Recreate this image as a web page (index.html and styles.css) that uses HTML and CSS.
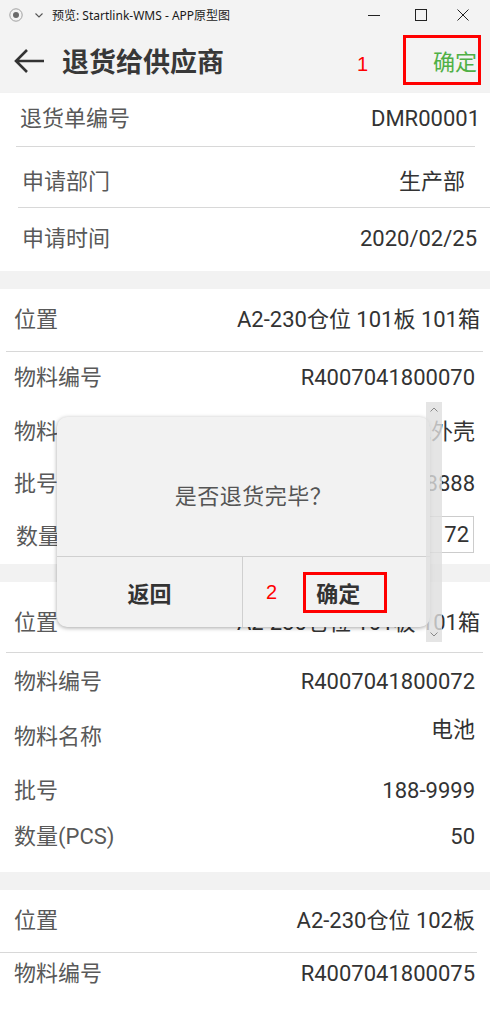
FILE: index.html
```html
<!DOCTYPE html>
<html lang="zh-CN">
<head>
    <meta charset="UTF-8">
    <meta name="viewport" content="width=device-width, initial-scale=1.0">
    <title>退货给供应商</title>
    <link rel="stylesheet" href="styles.css">
</head>
<body>

<div class="screen">
    <!-- Preview window title bar -->
    <div class="titlebar">
        <svg class="rec-icon" width="14" height="14" viewBox="0 0 14 14">
            <circle cx="7" cy="7" r="6.2" fill="none" stroke="#a0a0a0" stroke-width="1"/>
            <circle cx="7" cy="7" r="3" fill="#6a6a6a"/>
        </svg>
        <svg class="menu-chevron" width="8" height="5" viewBox="0 0 8 5">
            <path d="M0.5 0.5 L4 4 L7.5 0.5" fill="none" stroke="#555" stroke-width="1.1"/>
        </svg>
        <span class="window-title">预览: Startlink-WMS - APP原型图</span>
        <div class="win-controls">
            <svg class="win-min" width="12" height="12" viewBox="0 0 12 12">
                <path d="M0 6.5 H12" stroke="#222" stroke-width="1"/>
            </svg>
            <svg class="win-max" width="12" height="12" viewBox="0 0 12 12">
                <rect x="0.5" y="0.5" width="11" height="11" fill="none" stroke="#222" stroke-width="1"/>
            </svg>
            <svg class="win-close" width="12" height="12" viewBox="0 0 12 12">
                <path d="M0.5 0.5 L11.5 11.5 M11.5 0.5 L0.5 11.5" stroke="#222" stroke-width="1"/>
            </svg>
        </div>
    </div>

    <!-- App header -->
    <div class="header">
        <svg class="back" width="32" height="26" viewBox="0 0 32 26">
            <path d="M31 13 H3 M14 2 L3 13 L14 24" fill="none" stroke="#333" stroke-width="2.6"/>
        </svg>
        <h1 class="page-title">退货给供应商</h1>
        <span class="mark mark-1">1</span>
        <div class="confirm-box">确定</div>
    </div>

    <div class="content">
        <!-- Order info -->
        <div class="card head">
            <div class="row h53">
                <span class="label">退货单编号</span>
                <span class="value pr10">DMR00001</span>
            </div>
            <div class="line l1"></div>
            <div class="row h60 pt10 pl22">
                <span class="label">申请部门</span>
                <span class="value pr25">生产部</span>
            </div>
            <div class="line l2"></div>
            <div class="row h63 pl22">
                <span class="label">申请时间</span>
                <span class="value pr13">2020/02/25</span>
            </div>
        </div>

        <!-- Item 1 -->
        <div class="card">
            <div class="row h62">
                <span class="label">位置</span>
                <span class="value pr10">A2-230仓位 101板 101箱</span>
            </div>
            <div class="line l3"></div>
            <div class="row h53">
                <span class="label">物料编号</span>
                <span class="value">R4007041800070</span>
            </div>
            <div class="row h54">
                <span class="label">物料名称</span>
                <span class="value">电池外壳</span>
            </div>
            <div class="row h51">
                <span class="label">批号</span>
                <span class="value">188-8888</span>
            </div>
            <div class="row h54 pl16">
                <span class="label">数量(PCS)</span>
                <div class="qty-box">72</div>
            </div>
        </div>

        <!-- Item 2 -->
        <div class="card">
            <div class="row h70 pt12">
                <span class="label">位置</span>
                <span class="value pr10">A2-230仓位 101板 101箱</span>
            </div>
            <div class="line l3"></div>
            <div class="row h58">
                <span class="label">物料编号</span>
                <span class="value">R4007041800072</span>
            </div>
            <div class="row h53">
                <span class="label">物料名称</span>
                <span class="value top">电池</span>
            </div>
            <div class="row h51 pt4">
                <span class="label">批号</span>
                <span class="value">188-9999</span>
            </div>
            <div class="row h57 pb12">
                <span class="label">数量(PCS)</span>
                <span class="value">50</span>
            </div>
        </div>

        <!-- Item 3 -->
        <div class="card">
            <div class="row h62">
                <span class="label">位置</span>
                <span class="value">A2-230仓位 102板</span>
            </div>
            <div class="line l4"></div>
            <div class="row h42">
                <span class="label">物料编号</span>
                <span class="value">R4007041800075</span>
            </div>
            <div class="row h53"></div>
        </div>
    </div>

    <!-- Confirm dialog -->
    <div class="dialog">
        <div class="dialog-msg">是否退货完毕？</div>
        <div class="dialog-btns">
            <div class="dlg-btn">返回</div>
            <div class="dlg-btn ok">
                <span class="mark mark-2">2</span>
                <span class="ok-box">确定</span>
            </div>
        </div>
    </div>

    <!-- Scroll strip of the dialog -->
    <div class="scrollbar">
        <svg width="8" height="5" viewBox="0 0 8 5">
            <path d="M0.5 4.5 L4 1 L7.5 4.5" fill="none" stroke="#888" stroke-width="1"/>
        </svg>
        <svg width="8" height="5" viewBox="0 0 8 5">
            <path d="M0.5 0.5 L4 4 L7.5 0.5" fill="none" stroke="#888" stroke-width="1"/>
        </svg>
    </div>
</div>

</body>
</html>
```

FILE: styles.css
```css
body {
    margin: 0;
    font-family: Roboto, "Noto Sans CJK SC", sans-serif;
}

.screen {
    position: relative;
    width: 490px;
    height: 1012px;
    overflow: hidden;
    background-color: #f2f2f2;
}

/* Window title bar */
.titlebar {
    height: 30px;
    display: flex;
    align-items: center;
    padding-left: 9px;
    background-color: #f3f3f3;
    font-family: "Noto Sans", "Noto Sans CJK SC", sans-serif;
    font-size: 12px;
    color: #1a1a1a;
}

.menu-chevron {
    margin-left: 12px;
}

.window-title {
    margin-left: 9px;
}

.win-controls {
    margin-left: auto;
    display: flex;
    align-items: center;
    padding-right: 21px;
}

.win-max {
    margin-left: 35px;
}

.win-close {
    margin-left: 30px;
}

/* App header */
.header {
    height: 62px;
    display: flex;
    align-items: center;
    background-color: #f3f3f3;
}

.back {
    margin-left: 13px;
}

.page-title {
    margin: 0 0 2px 17px;
    font-size: 27px;
    font-weight: bold;
    color: #383838;
}

.mark {
    font-family: "Liberation Sans", sans-serif;
    font-size: 20px;
    color: #f00;
}

.mark-1 {
    margin-left: auto;
    padding-top: 6px;
}

.confirm-box {
    box-sizing: border-box;
    width: 78px;
    height: 50px;
    margin: 0 9px 2px 35px;
    border: 3px solid #f00;
    display: flex;
    align-items: center;
    justify-content: flex-end;
    padding-right: 1px;
    font-size: 22px;
    color: #4fb046;
}

/* Cards */
.content {
    padding-top: 1px;
}

.card {
    background-color: #fff;
    margin-bottom: 18px;
}

.row {
    display: flex;
    align-items: center;
    justify-content: space-between;
    box-sizing: border-box;
    padding: 0 15px 0 14px;
    line-height: 1.3;
    font-size: 22px;
}

.head .row {
    padding-left: 20px;
}

.head .row.pl22 {
    padding-left: 22px;
}

.row.pl16 { padding-left: 16px; }

.h42 { height: 42px; }
.h51 { height: 51px; }
.h53 { height: 53px; }
.h54 { height: 54px; }
.h57 { height: 57px; }
.h58 { height: 58px; }
.h60 { height: 60px; }
.h62 { height: 62px; }
.h63 { height: 63px; }
.h70 { height: 70px; }

.pt4 { padding-top: 4px; }
.pt10 { padding-top: 10px; }
.pt12 { padding-top: 12px; }
.pb12 { padding-bottom: 12px; }

.label {
    color: #595959;
}

.value {
    color: #333;
}

.value.pr10 { margin-right: -5px; }
.value.pr13 { margin-right: -2px; }
.value.pr25 { margin-right: 10px; }

.value.top {
    align-self: flex-start;
    padding-top: 5px;
}

.line {
    height: 1px;
    background-color: #d8d8d8;
}

.l1 { margin: 0 15px 0 16px; }
.l2 { margin-left: 18px; }
.l3 { margin: 0 7px 0 6px; }
.l4 { margin-right: 13px; }

.qty-box {
    box-sizing: border-box;
    width: 130px;
    height: 37px;
    margin: 0 1px 5px 0;
    border: 1px solid #ccc;
    text-align: right;
    padding-right: 4px;
    line-height: 35px;
    color: #333;
}

/* Dialog */
.dialog {
    position: absolute;
    left: 57px;
    top: 417px;
    width: 373px;
    height: 210px;
    border-radius: 10px;
    background-color: #f2f2f2;
    box-shadow: 0 1px 4px rgba(0, 0, 0, 0.35);
    display: flex;
    flex-direction: column;
}

.dialog-msg {
    height: 140px;
    box-sizing: border-box;
    padding: 14px 0 0 20px;
    display: flex;
    align-items: center;
    justify-content: center;
    font-size: 22px;
    letter-spacing: 0.5px;
    color: #555;
    border-bottom: 1px solid #d0d0d0;
}

.dialog-btns {
    flex: 1;
    display: flex;
}

.dlg-btn {
    width: 185px;
    display: flex;
    align-items: center;
    justify-content: center;
    font-size: 22px;
    font-weight: bold;
    color: #333;
}

.dlg-btn.ok {
    flex: 1;
    justify-content: flex-start;
    padding-left: 23px;
    border-left: 1px solid #d0d0d0;
}

.mark-2 {
    font-size: 20px;
    font-weight: normal;
}

.ok-box {
    box-sizing: border-box;
    width: 84px;
    height: 41px;
    margin-left: 26px;
    border: 3px solid #f00;
    padding-left: 10px;
    display: flex;
    align-items: center;
}

.scrollbar {
    position: absolute;
    left: 426px;
    top: 402px;
    width: 16px;
    height: 240px;
    box-sizing: border-box;
    padding: 5px 0;
    background-color: rgba(222, 222, 222, 0.8);
    display: flex;
    flex-direction: column;
    justify-content: space-between;
    align-items: center;
}
```
